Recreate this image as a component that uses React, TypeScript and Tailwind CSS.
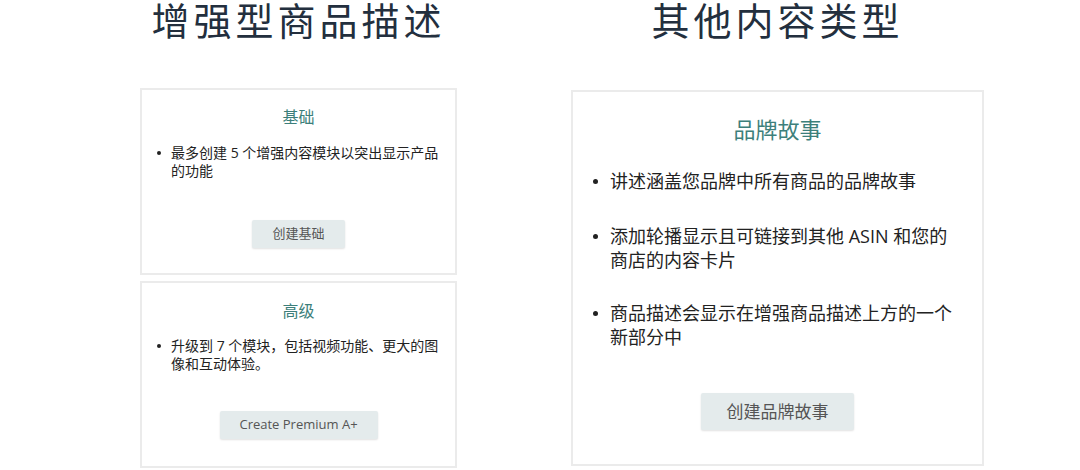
import React from "react";

const font = { fontFamily: '"Open Sans", "Noto Sans CJK SC", sans-serif' };
const headFont = { fontFamily: '"Liberation Sans", "Noto Sans CJK SC", sans-serif' };

function Bullet({ children, big }: { children: React.ReactNode; big?: boolean }) {
  return (
    <div className="flex items-start">
      <span
        className={
          big
            ? "mt-[10px] ml-[20px] mr-[12px] h-[5px] w-[5px] shrink-0 rounded-full bg-[#222]"
            : "mt-[7px] ml-[15px] mr-[10px] h-[4px] w-[4px] shrink-0 rounded-full bg-[#222]"
        }
      />
      <div>{children}</div>
    </div>
  );
}

function SmallCard({
  title,
  text,
  button,
  titleTop,
  listTop,
  buttonTop,
  buttonWidth,
}: {
  title: string;
  text: string;
  button: string;
  titleTop: string;
  listTop: string;
  buttonTop: string;
  buttonWidth: string;
}) {
  return (
    <div className="h-[187px] border-2 border-[#ebebeb] bg-white">
      <div className={`${titleTop} text-center text-[16px] leading-[20px] text-[#3d7f7b]`}>{title}</div>
      <div className={`${listTop} pr-[14px] text-[14px] leading-[18px] text-[#222]`}>
        <Bullet>{text}</Bullet>
      </div>
      <div className={`${buttonTop} flex justify-center`}>
        <button
          className={`${buttonWidth} h-[28px] rounded-[2px] bg-[#e4ebec] text-[13px] text-[#555] shadow-[0_1px_2px_rgba(0,0,0,0.12)]`}
        >
          {button}
        </button>
      </div>
    </div>
  );
}

export default function App() {
  return (
    <div className="h-[470px] w-[1080px] bg-white" style={font}>
      <div className="flex gap-[114px] pl-[140px]">
        <div className="flex w-[317px] flex-col">
          <h1
            className="text-center text-[38px] leading-[44px] tracking-[4px] text-[#232f3e]"
            style={headFont}
          >
            增强型商品描述
          </h1>
          <div className="mt-[44px] flex flex-col gap-[6px]">
            <SmallCard
              title="基础"
              text="最多创建 5 个增强内容模块以突出显示产品的功能"
              button="创建基础"
              titleTop="mt-[17px]"
              listTop="mt-[17px]"
              buttonTop="mt-[40px]"
              buttonWidth="w-[93px]"
            />
            <SmallCard
              title="高级"
              text="升级到 7 个模块，包括视频功能、更大的图像和互动体验。"
              button="Create Premium A+"
              titleTop="mt-[18px]"
              listTop="mt-[16px]"
              buttonTop="mt-[38px]"
              buttonWidth="w-[158px]"
            />
          </div>
        </div>
        <div className="flex w-[413px] flex-col">
          <h1
            className="text-center text-[38px] leading-[44px] tracking-[4px] text-[#232f3e]"
            style={headFont}
          >
            其他内容类型
          </h1>
          <div className="mt-[46px] h-[376px] border-2 border-[#ebebeb] bg-white">
            <div className="mt-[23px] text-center text-[22px] leading-[28px] text-[#3d7f7b]">品牌故事</div>
            <div className="pr-[20px] text-[18px] leading-[24px] text-[#222]">
              <div className="mt-[26px]">
                <Bullet big>讲述涵盖您品牌中所有商品的品牌故事</Bullet>
              </div>
              <div className="mt-[31px]">
                <Bullet big>添加轮播显示且可链接到其他 ASIN 和您的商店的内容卡片</Bullet>
              </div>
              <div className="mt-[29px]">
                <Bullet big>商品描述会显示在增强商品描述上方的一个新部分中</Bullet>
              </div>
            </div>
            <div className="mt-[44px] flex justify-center">
              <button className="h-[37px] w-[153px] rounded-[2px] bg-[#e4ebec] text-[17px] text-[#555] shadow-[0_1px_2px_rgba(0,0,0,0.12)]">
                创建品牌故事
              </button>
            </div>
          </div>
        </div>
      </div>
    </div>
  );
}
